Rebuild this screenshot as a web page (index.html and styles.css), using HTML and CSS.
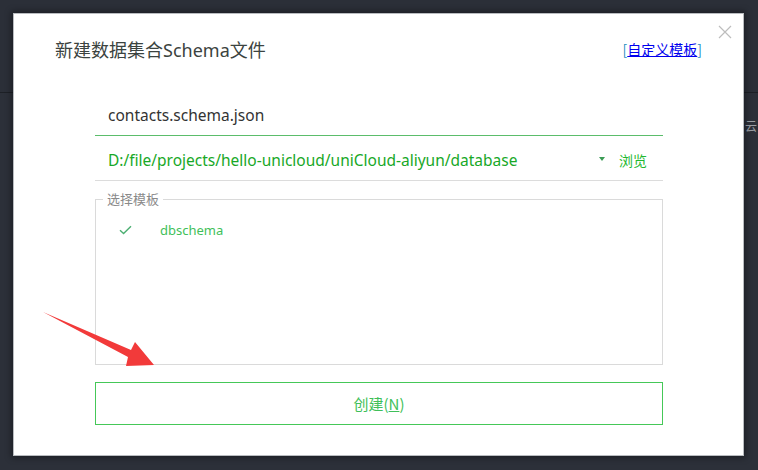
FILE: index.html
```html
<!DOCTYPE html>
<html lang="zh">
<head>
<meta charset="utf-8">
<title>新建数据集合Schema文件</title>
<link rel="stylesheet" href="styles.css">
</head>
<body>
<div class="backdrop">
  <div class="bg-top"></div>
  <div class="bg-rest"><span class="bg-text">云</span></div>
</div>
<div class="dialog">
  <div class="close" aria-label="关闭">
    <svg width="14" height="14" viewBox="0 0 14 14"><path d="M1 1L13 13M13 1L1 13" stroke="#bdbdbd" stroke-width="1.2" fill="none"/></svg>
  </div>
  <div class="header">
    <h1 class="title">新建数据集合Schema文件</h1>
    <span class="custom">[<a href="#">自定义模板</a>]</span>
  </div>
  <div class="form">
    <div class="field field-name">contacts.schema.json</div>
    <div class="field field-path">
      <span class="path">D:/file/projects/hello-unicloud/uniCloud-aliyun/database</span>
      <span class="caret"></span>
      <span class="browse">浏览</span>
    </div>
    <fieldset class="templates">
      <legend>选择模板</legend>
      <div class="tpl-item">
        <svg class="check" width="13" height="10" viewBox="0 0 13 10"><path d="M1 5.2L4.6 8.6L12 1.2" stroke="#4caf72" stroke-width="1.4" fill="none"/></svg>
        <span class="tpl-name">dbschema</span>
      </div>
    </fieldset>
    <button class="create">创建(<u>N</u>)</button>
  </div>
</div>
<svg class="arrow" width="758" height="470" viewBox="0 0 758 470">
  <polygon points="43,312 131,350 135,342 154,365 126,366 128,357" fill="#f23a3a"/>
</svg>
</body>
</html>
```
FILE: styles.css
```css
html, body {
  margin: 0;
  padding: 0;
  width: 758px;
  height: 470px;
  overflow: hidden;
  background: #2b2f38;
  font-family: "Noto Sans", "Noto Sans CJK SC", sans-serif;
}
.backdrop {
  display: flex;
  flex-direction: column;
  height: 470px;
}
.bg-top {
  height: 92px;
  border-bottom: 1px solid #1d2026;
  background: #2b2f38;
}
.bg-rest {
  flex: 1;
  background: #2c3039;
  position: relative;
}
.bg-text {
  position: absolute;
  left: 745px;
  top: 24px;
  font-size: 12px;
  color: #9a9ea5;
  font-family: "Noto Sans CJK SC", sans-serif;
}
.dialog {
  position: absolute;
  left: 13px;
  top: 13px;
  width: 729px;
  height: 441px;
  background: #fff;
  border: 1px solid #b9bcc0;
  box-shadow: 0 0 6px 2px rgba(0,0,0,0.35);
}
.close {
  position: absolute;
  right: 11px;
  top: 11px;
  width: 14px;
  height: 14px;
}
.close svg { display: block; }
.header {
  display: flex;
  align-items: center;
  justify-content: space-between;
  padding: 22px 41px 0 41px;
  height: 26px;
}
.title {
  margin: 0;
  font-weight: normal;
  font-size: 18px;
  color: #3b4340;
}
.custom {
  font-size: 14px;
  color: #1f8fbf;
  font-family: "Noto Sans CJK SC", sans-serif;
}
.custom a {
  color: #0000ee;
  text-decoration: underline;
}
.form {
  margin: 29px 0 0 81px;
  width: 568px;
  display: flex;
  flex-direction: column;
}
.field {
  height: 45px;
  display: flex;
  align-items: center;
  padding: 4px 0 0 13px;
  font-size: 15.5px;
  box-sizing: border-box;
}
.field-name {
  color: #333;
  border-bottom: 1px solid #5bbd6b;
}
.field-path {
  color: #18a827;
  border-bottom: 1px solid #dcdcdc;
}
.path { flex: 1; }
.caret {
  width: 0;
  height: 0;
  border-left: 3px solid transparent;
  border-right: 3px solid transparent;
  border-top: 4px solid #3b9c55;
  margin-right: 14px;
  margin-top: -2px;
}
.browse {
  font-size: 14px;
  color: #1fb82f;
  margin-right: 16px;
  font-family: "Noto Sans CJK SC", sans-serif;
}
.templates {
  margin: 10px 0 0 0;
  padding: 13px 0 0 0;
  height: 174px;
  box-sizing: border-box;
  border: 1px solid #dadada;
  min-width: 0;
}
.templates legend {
  margin-left: 7px;
  padding: 0 4px 0 4px;
  font-size: 13px;
  color: #8a8a8a;
  font-family: "Noto Sans CJK SC", sans-serif;
  line-height: 16px;
}
.tpl-item {
  display: flex;
  align-items: center;
  padding-left: 23px;
  height: 20px;
}
.check { display: block; }
.tpl-name {
  margin-left: 28px;
  font-size: 13px;
  color: #3fbf5a;
}
.create {
  margin-top: 17px;
  height: 43px;
  width: 568px;
  background: #fff;
  border: 1px solid #45c858;
  color: #3fbf5a;
  font-size: 15px;
  font-family: "Noto Sans CJK SC", sans-serif;
  padding: 0;
}
.create u { text-decoration: underline; }
.arrow {
  position: absolute;
  left: 0;
  top: 0;
  pointer-events: none;
}
```
